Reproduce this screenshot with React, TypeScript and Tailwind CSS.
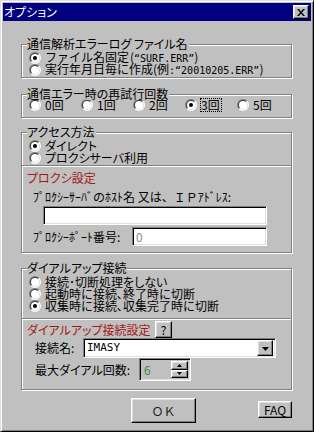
import type { ReactNode } from "react";

const mono = "font-['DejaVu_Sans_Mono',monospace] text-[10px]";

function Radio({ checked }: { checked?: boolean }) {
  return (
    <svg width="12" height="12" viewBox="0 0 12 12" className="shrink-0">
      <path d="M1.757 10.243A6 6 0 0 1 10.243 1.757Z" fill="#808080" />
      <path d="M10.243 1.757A6 6 0 0 1 1.757 10.243Z" fill="#ffffff" />
      <path d="M2.464 9.536A5 5 0 0 1 9.536 2.464Z" fill="#404040" />
      <path d="M9.536 2.464A5 5 0 0 1 2.464 9.536Z" fill="#dfdfdf" />
      <circle cx="6" cy="6" r="4" fill="#ffffff" />
      {checked && <circle cx="6" cy="6" r="2" fill="#000000" />}
    </svg>
  );
}

function RadioRow({ label, checked, prop }: { label: ReactNode; checked?: boolean; prop?: boolean }) {
  return (
    <div className="flex h-[12px] items-center gap-[4px]">
      <Radio checked={checked} />
      <span
        className={
          prop
            ? "whitespace-nowrap leading-[12px]"
            : "whitespace-nowrap leading-[12px] [font-feature-settings:normal]"
        }
      >
        {label}
      </span>
    </div>
  );
}

function Frame({
  title,
  className,
  children,
}: {
  title: string;
  className: string;
  children: ReactNode;
}) {
  return (
    <div
      className={`relative border border-[#808080] shadow-[inset_1px_1px_0_#fff,1px_1px_0_#fff] ${className}`}
    >
      <span className="absolute left-[5px] top-[-7px] whitespace-nowrap bg-[#c0c0c0] pr-[1px] leading-[12px]">
        {title}
      </span>
      {children}
    </div>
  );
}

const raised =
  "border border-white border-r-black border-b-black shadow-[inset_-1px_-1px_0_#808080,inset_1px_1px_0_#dfdfdf] bg-[#c0c0c0]";
const sunken =
  "border border-[#808080] border-r-white border-b-white shadow-[inset_1px_1px_0_#000,inset_-1px_-1px_0_#dfdfdf]";

function Separator() {
  return <div className="h-[2px] border-t border-b border-t-[#808080] border-b-white" />;
}

export default function App() {
  return (
    <div className="h-[432px] w-[314px] border border-[#dfdfdf] border-r-black border-b-black bg-[#c0c0c0] p-[2px] text-[12px] text-black shadow-[inset_1px_1px_0_#fff,inset_-1px_-1px_0_#808080] font-['Noto_Sans_CJK_JP',sans-serif] [font-feature-settings:'palt']">
      {/* title bar */}
      <div className="flex h-[18px] items-center justify-between bg-[#000080]">
        <span className="pl-[1px] leading-[12px] text-white">オプション</span>
        <button className={`mr-[2px] flex h-[14px] w-[16px] items-center justify-center ${raised}`}>
          <svg width="8" height="7" viewBox="0 0 8 7">
            <path d="M0 0h2l2 2.5L6 0h2L5 3.5 8 7H6L4 4.5 2 7H0l3-3.5z" fill="#000" />
          </svg>
        </button>
      </div>

      {/* log file name */}
      <Frame title="通信解析エラーログ ファイル名" className="ml-[18px] mt-[23px] h-[34px] w-[271px] pl-[7px] pt-[7px]">
        <RadioRow
          checked
          label={
            <>
              <span className="inline-block w-[85px]">ファイル名固定</span>(<span className={mono}>“SURF.ERR”</span>)
            </>
          }
        />
        <RadioRow
          label={
            <>
              <span className="inline-block w-[108px]">実行年月日毎に作成</span>(例<span className={mono}>:“20010205.ERR”</span>)
            </>
          }
        />
      </Frame>

      {/* retry count */}
      <Frame title="通信エラー時の再試行回数" className="ml-[18px] mt-[16px] h-[24px] w-[271px] pl-[7px] pt-[4px]">
        <div className="flex [font-feature-settings:normal]">
          {["0回", "1回", "2回", "3回", "5回"].map((t) => (
            <div key={t} className="flex h-[12px] w-[52px] items-center gap-[4px]">
              <Radio checked={t === "3回"} />
              {t === "3回" ? (
                <span className="-ml-[1px] border border-dotted border-black pr-[1px] leading-[12px]">{t}</span>
              ) : (
                <span className="leading-[12px]">{t}</span>
              )}
            </div>
          ))}
        </div>
      </Frame>

      {/* access method */}
      <Frame title="アクセス方法" className="ml-[18px] mt-[14px] h-[121px] w-[271px]">
        <div className="pl-[7px] pt-[7px]">
          <RadioRow checked prop label="ダイレクト" />
          <RadioRow prop label="プロクシサーバ利用" />
        </div>
        <div className="mt-[1px]">
          <Separator />
        </div>
        <div className="mt-[5px] pl-[5px] leading-[12px] text-[#a01818]">プロクシ設定</div>
        <div className="mt-[7px] whitespace-nowrap pl-[11px] leading-[12px] [font-feature-settings:normal]">
          ﾌﾟﾛｸｼｰｻｰﾊﾞのﾎｽﾄ名 又は、ＩＰｱﾄﾞﾚｽ:
        </div>
        <div className={`ml-[21px] mt-[3px] h-[19px] w-[224px] bg-white ${sunken}`} />
        <div className="mt-[2px] flex items-center pl-[11px]">
          <span className="w-[99px] whitespace-nowrap leading-[12px] [font-feature-settings:normal]">ﾌﾟﾛｸｼｰﾎﾟｰﾄ番号:</span>
          <div className={`flex h-[19px] w-[135px] items-center bg-white pl-[3px] leading-[12px] text-[#8a8a8a] ${sunken}`}>0</div>
        </div>
      </Frame>

      {/* dial-up */}
      <Frame title="ダイアルアップ接続" className="ml-[18px] mt-[15px] h-[122px] w-[271px]">
        <div className="pl-[7px] pt-[7px]">
          <RadioRow prop label="接続･切断処理をしない" />
          <RadioRow label="起動時に接続､終了時に切断" />
          <RadioRow checked label="収集時に接続､収集完了時に切断" />
        </div>
        <div className="mt-[6px]">
          <Separator />
        </div>
        <div className="mt-[1px] flex h-[17px] items-center pl-[5px]">
          <span className="w-[128px] whitespace-nowrap leading-[12px] text-[#a01818]">ダイアルアップ接続設定</span>
          <button className={`flex h-[17px] w-[17px] items-center justify-center leading-[12px] ${raised}`}>?</button>
        </div>
        <div className="flex items-center pl-[13px] [font-feature-settings:normal]">
          <span className="w-[48px] whitespace-nowrap leading-[12px]">接続名:</span>
          <div className={`flex h-[20px] w-[193px] items-center justify-between bg-white p-[2px] ${sunken}`}>
            <span className="pl-[1px] leading-[12px] font-['DejaVu_Sans_Mono',monospace] text-[11px]">IMASY</span>
            <div className={`flex h-[16px] w-[16px] items-center justify-center ${raised}`}>
              <svg width="7" height="4" viewBox="0 0 7 4" className="mt-[1px]">
                <path d="M0 0h7L3.5 4z" fill="#000" />
              </svg>
            </div>
          </div>
        </div>
        <div className="flex items-center pl-[13px]">
          <span className="w-[104px] whitespace-nowrap leading-[12px]">最大ダイアル回数:</span>
          <div className={`flex h-[23px] w-[52px] p-[2px] ${sunken}`}>
            <div className="flex flex-1 items-center pl-[2px] leading-[12px] text-[#3c8a3c]">6</div>
            <div className="flex w-[17px] flex-col">
              <div className={`flex h-[10px] items-center justify-center ${raised}`}>
                <svg width="5" height="3" viewBox="0 0 5 3">
                  <path d="M2.5 0L5 3H0z" fill="#000" />
                </svg>
              </div>
              <div className={`flex h-[9px] items-center justify-center ${raised}`}>
                <svg width="5" height="3" viewBox="0 0 5 3">
                  <path d="M0 0h5L2.5 3z" fill="#000" />
                </svg>
              </div>
            </div>
          </div>
        </div>
      </Frame>

      {/* buttons */}
      <div className="mt-[8px] flex items-start [font-feature-settings:normal]">
        <button className={`ml-[128px] flex h-[25px] w-[65px] items-center justify-center leading-[12px] text-[#202020] ${raised}`}>
          ＯＫ
        </button>
        <button className={`ml-[62px] mt-[3px] flex h-[17px] w-[34px] items-center justify-center leading-[12px] ${raised}`}>
          FAQ
        </button>
      </div>
    </div>
  );
}
